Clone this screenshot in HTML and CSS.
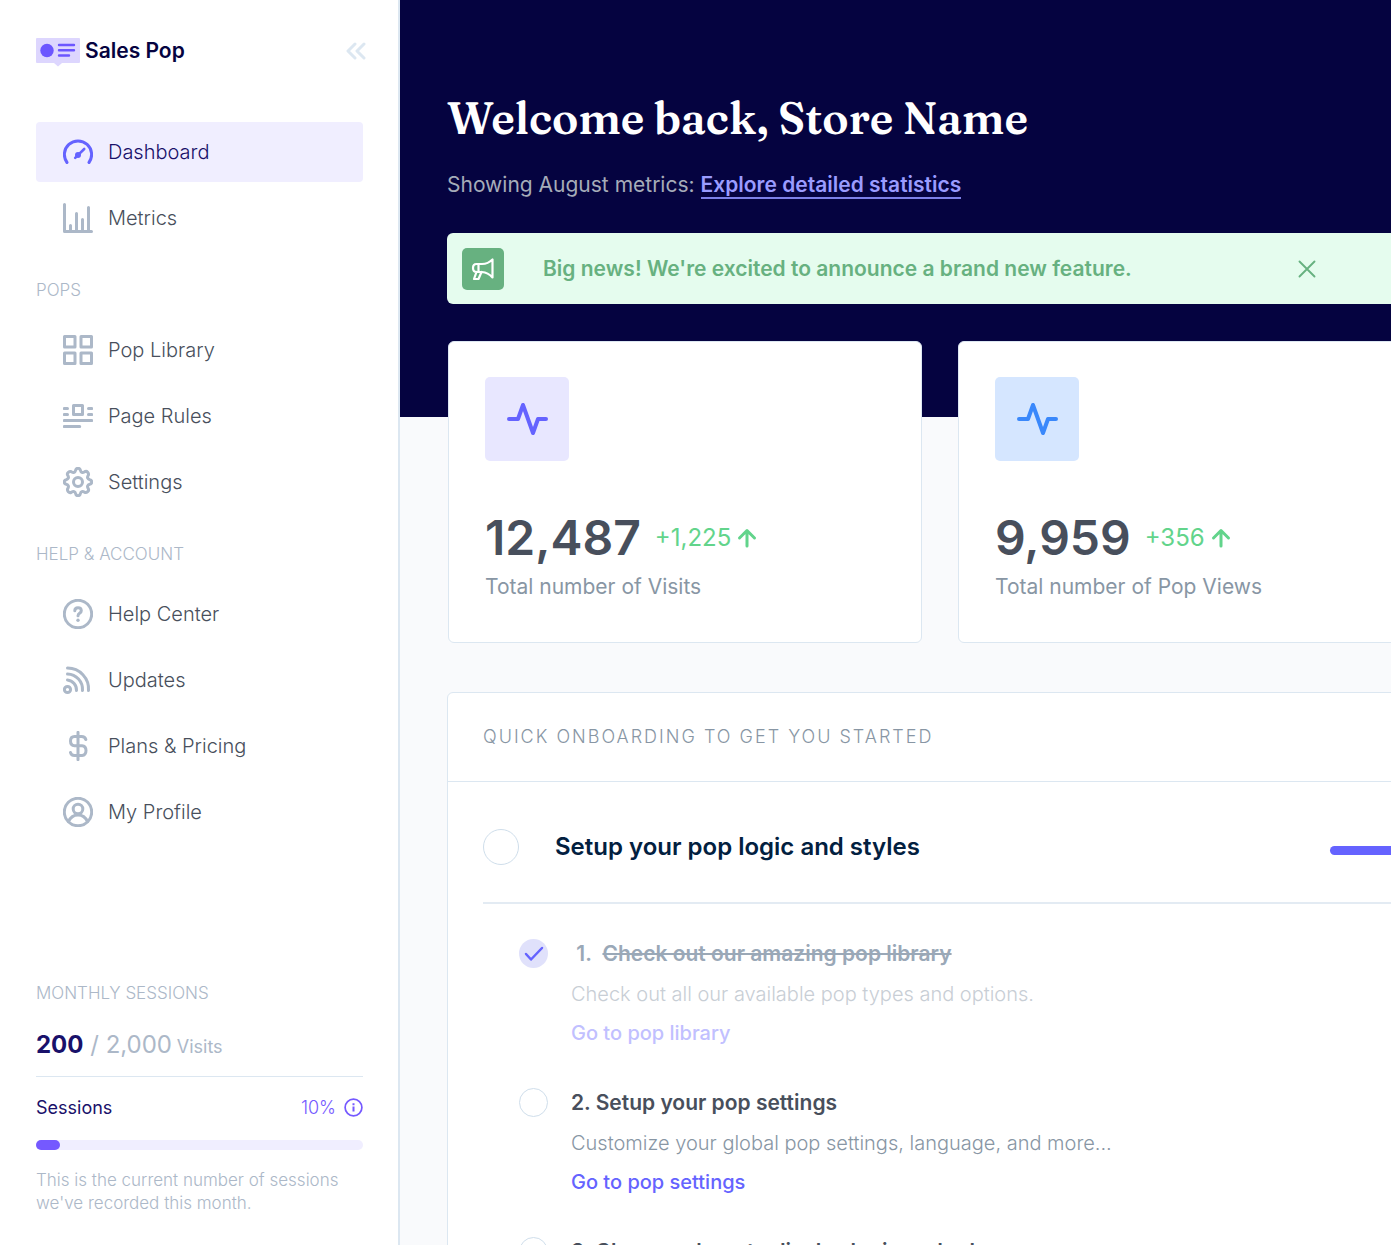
FILE: index.html
```html
<!DOCTYPE html>
<html lang="en">
<head>
<meta charset="utf-8">
<meta name="viewport" content="width=device-width, initial-scale=1">
<title>Sales Pop – Dashboard</title>
<link rel="stylesheet" href="styles.css">
</head>
<body>
<div class="app">
  <aside class="sidebar">
    <header class="brand-row">
      <a class="brand" href="#">
        <svg class="brand-mark" width="44" height="32" viewBox="0 0 44 32" aria-hidden="true">
          <path d="M1 3h42q1 0 1 1v23q0 1-1 1H26l-4 3.500-4-3.500H1q-1 0-1-1V4q0-1 1-1z" fill="#ddd6fe"/>
          <circle cx="11" cy="15.500" r="6.700" fill="#6c56ff"/>
          <path d="M23 10h15M23 15.300h15M23 20.500h10" stroke="#6c56ff" stroke-width="2.400" stroke-linecap="round"/>
        </svg>
        <span>Sales Pop</span>
      </a>
      <button class="icon-button collapse" type="button" aria-label="Collapse sidebar">
        <svg width="20" height="18" viewBox="0 0 20 18" fill="none" stroke="currentColor" stroke-width="3" stroke-linecap="round" stroke-linejoin="round"><path d="M9 2L2 9l7 7M18 2l-7 7 7 7"/></svg>
      </button>
    </header>

    <nav class="nav" aria-label="Main">
      <a class="nav-link is-active" href="#">
        <svg class="nav-icon" viewBox="0 0 30 30"><path d="M4 25.500A13.600 13.600 0 1 1 26 25.500"/><circle cx="15" cy="18" r="3" fill="currentColor" stroke="none"/><path d="M12.200 20.800l3-3 6-5.800" stroke-width="2.600"/></svg>
        Dashboard
      </a>
      <a class="nav-link" href="#">
        <svg class="nav-icon" viewBox="0 0 30 30"><path d="M1.500 1.500v27h27M7.500 28v-5.500M13.500 28V10.500M19.500 28V16.500M25.500 28V4.500"/></svg>
        Metrics
      </a>

      <h2 class="nav-heading">POPS</h2>
      <a class="nav-link" href="#">
        <svg class="nav-icon" viewBox="0 0 30 30"><path d="M1.500 1.500h10.500v10.500H1.500zM18 1.500h10.500v10.500H18zM1.500 18h10.500v10.500H1.500zM18 18h10.500v10.500H18z"/></svg>
        Pop Library
      </a>
      <a class="nav-link" href="#">
        <svg class="nav-icon" viewBox="0 0 30 30"><path d="M10.500 4.500h9v9h-9zM1.300 7.500h3.200M1.300 13.500h3.200M25.500 7.500h3.200M25.500 13.500h3.200M1.300 19.500h27.400M1.300 25.500h15.400"/></svg>
        Page Rules
      </a>
      <a class="nav-link" href="#">
        <svg class="nav-icon" viewBox="0 0 30 30"><circle cx="15" cy="15" r="4.500"/><path d="M12.700 3.200Q13 1.300 15 1.300T17.300 3.200Q18.300 6.800 21.700 4.700Q23.400 3.800 24.700 5.300T25.300 8.300Q23.200 11.700 26.800 12.700Q28.700 13 28.700 15T26.800 17.300Q23.200 18.300 25.300 21.700Q26.200 23.400 24.700 24.700T21.700 25.300Q18.300 23.200 17.300 26.800Q17 28.700 15 28.700T12.700 26.800Q11.700 23.200 8.300 25.300Q6.600 26.200 5.300 24.700T4.700 21.700Q6.800 18.300 3.200 17.300Q1.300 17 1.300 15T3.200 12.700Q6.800 11.700 4.700 8.300Q3.800 6.600 5.300 5.300T8.300 4.700Q11.700 6.800 12.700 3.200z"/></svg>
        Settings
      </a>

      <h2 class="nav-heading">HELP &amp; ACCOUNT</h2>
      <a class="nav-link" href="#">
        <svg class="nav-icon" viewBox="0 0 30 30"><circle cx="15" cy="15" r="13.700"/><path d="M11.800 11.800q0-3 3.200-3t3.300 2.900q0 1.500-1.600 2.400t-1.700 2.700"/><circle cx="15" cy="21.300" r="1.700" fill="currentColor" stroke="none"/></svg>
        Help Center
      </a>
      <a class="nav-link" href="#">
        <svg class="nav-icon" viewBox="0 0 30 30"><circle cx="4.500" cy="24.500" r="3.100"/><path d="M4.500 3A21 21 0 0 1 25.500 25.500M4.500 9A15.500 15.500 0 0 1 19.500 25.500M4.500 15A10 10 0 0 1 13.500 25.500"/></svg>
        Updates
      </a>
      <a class="nav-link" href="#">
        <svg class="nav-icon" viewBox="0 0 30 30"><path d="M15 1.300v27.400M22.800 8.500q-.8-3-4.300-3h-7q-4 0-4 4.500t4 4.700h7.500q4 .2 4 4.800t-4 5h-7.500q-3.400 0-4-3"/></svg>
        Plans &amp; Pricing
      </a>
      <a class="nav-link" href="#">
        <svg class="nav-icon" viewBox="0 0 30 30"><circle cx="15" cy="15" r="13.700"/><circle cx="15" cy="12" r="4.800"/><path d="M5.500 24.500q3-6.500 9.500-6.500t9.500 6.500"/></svg>
        My Profile
      </a>
    </nav>

    <section class="usage">
      <h2 class="usage-title">MONTHLY SESSIONS</h2>
      <p class="usage-count"><strong>200</strong> / 2,000 <small>Visits</small></p>
      <div class="usage-row">
        <span>Sessions</span>
        <span class="usage-percent">10%
          <svg width="20" height="20" viewBox="0 0 20 20" fill="none" stroke="currentColor" stroke-width="1.700"><circle cx="10.500" cy="9.500" r="8.400"/><path d="M10.500 8.500v5M10.500 5.300v2" stroke-width="2"/></svg>
        </span>
      </div>
      <div class="usage-track" role="progressbar" aria-label="Sessions" aria-valuenow="10" aria-valuemin="0" aria-valuemax="100"><div class="usage-fill"></div></div>
      <p class="usage-note">This is the current number of sessions we've recorded this month.</p>
    </section>
  </aside>

  <main class="main">
    <section class="hero">
      <h1>Welcome back, Store Name</h1>
      <p class="subtitle">Showing August metrics: <a href="#">Explore detailed statistics</a></p>
      <div class="notice">
        <span class="notice-icon">
          <svg width="24" height="24" viewBox="0 0 24 24" fill="none" stroke="#fff" stroke-width="2.200" stroke-linejoin="round" stroke-linecap="round"><path d="M5.500 7H11q6 0 10.500-4.500v18q-4.500-5-10.500-5.500H5.500q-3.500 0-3.500-4t3.500-4zM7.500 7v8M5.500 15L3 22h4.500l3-7"/></svg>
        </span>
        <p>Big news! We're excited to announce a brand new feature.</p>
        <button class="icon-button" type="button" aria-label="Dismiss">
          <svg width="18" height="18" viewBox="0 0 18 18" fill="none" stroke="currentColor" stroke-width="1.900" stroke-linecap="round"><path d="M1.500 1.500l15 15M16.500 1.500l-15 15"/></svg>
        </button>
      </div>
    </section>

    <section class="stats" aria-label="Metrics">
      <article class="card stat">
        <span class="stat-icon"><svg width="42" height="36" viewBox="0 0 42 36"><path d="M3 18h9l5-14 10 28 5-14h8"/></svg></span>
        <p class="stat-line"><strong>12,487</strong><span class="delta">+1,225<svg width="20" height="20" viewBox="0 0 20 20"><path d="M10 18V3M2.500 10L10 2.500l7.500 7.500"/></svg></span></p>
        <p class="stat-label">Total number of Visits</p>
      </article>
      <article class="card stat">
        <span class="stat-icon is-blue"><svg width="42" height="36" viewBox="0 0 42 36"><path d="M3 18h9l5-14 10 28 5-14h8"/></svg></span>
        <p class="stat-line"><strong>9,959</strong><span class="delta">+356<svg width="20" height="20" viewBox="0 0 20 20"><path d="M10 18V3M2.500 10L10 2.500l7.500 7.500"/></svg></span></p>
        <p class="stat-label">Total number of Pop Views</p>
      </article>
    </section>

    <section class="card onboarding">
      <h2 class="onboarding-title">QUICK ONBOARDING TO GET YOU STARTED</h2>
      <div class="onboarding-body">
        <header class="group">
          <input class="check check-large" type="checkbox" id="group">
          <label for="group">Setup your pop logic and styles</label>
          <div class="group-progress" role="progressbar" aria-label="Setup progress" aria-valuenow="33"></div>
        </header>
        <ul class="steps">
          <li class="step is-done">
            <input class="check" type="checkbox" id="step1" checked>
            <div class="step-text">
              <label for="step1">&nbsp;1.&nbsp; <s>Check out our amazing pop library</s></label>
              <p>Check out all our available pop types and options.</p>
              <a href="#">Go to pop library</a>
            </div>
          </li>
          <li class="step">
            <input class="check" type="checkbox" id="step2">
            <div class="step-text">
              <label for="step2">2. Setup your pop settings</label>
              <p>Customize your global pop settings, language, and more...</p>
              <a href="#">Go to pop settings</a>
            </div>
          </li>
          <li class="step">
            <input class="check" type="checkbox" id="step3">
            <div class="step-text">
              <label for="step3">3. Choose where to display logic and rules</label>
            </div>
          </li>
        </ul>
      </div>
    </section>
  </main>
</div>
</body>
</html>
```
FILE: styles.css
```css
:root {
  --navy: #050340;
  --ink: #484f5c;
  --muted: #8896a4;
  --soft: #acb8c8;
  --line: #dce7f1;
  --violet: #6563ff;
}

* { box-sizing: border-box; }

body {
  margin: 0;
  background: #f9fafc;
  color: var(--ink);
  font-family: Inter, "Liberation Sans", sans-serif;
  font-size: 20px;
  line-height: 24px;
}

h1, h2, p, ul { margin: 0; padding: 0; }
ul { list-style: none; }
a { color: inherit; text-decoration: none; }

.app {
  display: grid;
  grid-template-columns: 400px minmax(0, 1fr);
  height: 100vh;
  overflow: hidden;
}

/* Sidebar */
.sidebar {
  display: flex;
  flex-direction: column;
  padding: 35px 35px 30px 36px;
  border-right: 2px solid var(--line);
  background: #fff;
}

.brand-row {
  display: flex;
  align-items: center;
  justify-content: space-between;
  margin-bottom: 55px;
}

.brand {
  display: flex;
  align-items: center;
  gap: 5px;
  color: var(--navy);
  font-size: 21px;
  font-weight: 600;
}

.icon-button {
  display: grid;
  padding: 0;
  border: 0;
  background: none;
  color: #67b180;
  cursor: pointer;
}

.collapse { color: var(--line); margin-right: -3px; }

.nav-link {
  display: flex;
  align-items: center;
  gap: 15px;
  height: 60px;
  margin-bottom: 6px;
  padding-left: 27px;
  border-radius: 4px;
  font-weight: 300;
}

.nav-link.is-active { background: #f0eeff; color: #19116a; }

.nav-icon {
  width: 30px;
  height: 30px;
  fill: none;
  stroke: currentColor;
  stroke-width: 3;
  stroke-linecap: round;
  stroke-linejoin: round;
  color: var(--soft);
}

.is-active .nav-icon { color: var(--violet); }

.nav-heading, .usage-title {
  color: var(--soft);
  font-size: 17px;
  font-weight: 300;
  line-height: 24px;
}

.nav-heading { padding: 24px 0 18px; }

.usage { margin-top: auto; }

.usage-count {
  padding: 25px 0 14px;
  border-bottom: 1px solid var(--line);
  color: var(--soft);
  font-size: 24px;
  line-height: 30px;
}

.usage-count strong { color: #19116a; }
.usage-count small { font-size: 18px; margin-left: -2px; }

.usage-row {
  display: flex;
  justify-content: space-between;
  margin: 19px 0 20px;
  color: #19116a;
  font-size: 18px;
}

.usage-percent { display: flex; align-items: center; gap: 7px; color: #7559ff; font-weight: 300; }

.usage-track { height: 10px; border-radius: 5px; background: #f0eeff; }
.usage-fill { width: 24px; height: 10px; border-radius: 5px; background: #7559ff; }

.usage-note {
  margin-top: 19px;
  color: var(--soft);
  font-size: 17px;
  font-weight: 300;
  line-height: 23px;
}

/* Main column */
.main { min-width: 0; overflow: hidden; }

.hero {
  padding: 88px 0 113px 47px;
  background: var(--navy);
}

h1 {
  color: #fff;
  font-family: Fraunces, "Liberation Serif", serif;
  font-size: 44px;
  font-weight: 600;
  line-height: 60px;
}

.subtitle {
  margin: 22px 0 33px;
  color: #a5acb9;
  font-size: 21px;
  line-height: 30px;
}

.subtitle a {
  color: #9a9cff;
  border-bottom: 2px solid #7d80e8;
  font-weight: 600;
}

.notice {
  display: flex;
  align-items: center;
  height: 71px;
  padding: 0 75px 0 15px;
  border-radius: 6px 0 0 6px;
  background: #e5fcee;
  color: #67b180;
  font-size: 21px;
  font-weight: 600;
}

.notice p { flex: 1; }

.notice-icon {
  display: grid;
  place-items: center;
  width: 42px;
  height: 42px;
  margin-right: 39px;
  border-radius: 5px;
  background: #67b180;
}

.card {
  border: 1px solid var(--line);
  border-radius: 6px;
  background: #fff;
}

.stats {
  display: grid;
  grid-template-columns: 474px 474px;
  gap: 36px;
  margin: -76px 0 49px 48px;
}

.stat { padding: 35px 36px 40px; }

.stat-icon {
  display: grid;
  place-items: center;
  width: 84px;
  height: 84px;
  margin-bottom: 47px;
  border-radius: 5px;
  background: #e8e7ff;
  color: var(--violet);
}

.stat-icon.is-blue { background: #d5e6ff; color: #3a88fb; }

.stat-icon svg, .delta svg {
  fill: none;
  stroke: currentColor;
  stroke-width: 4;
  stroke-linecap: round;
  stroke-linejoin: round;
}

.delta svg { stroke-width: 3; }

.stat-line { display: flex; align-items: center; gap: 14px; }
.stat-line strong { font-size: 48px; font-weight: 600; line-height: 60px; }
.delta { display: flex; align-items: center; gap: 6px; color: #62d48b; font-size: 24px; }
.stat-label { margin-top: 4px; color: var(--muted); font-size: 21px; line-height: 30px; }

.onboarding { width: 1100px; margin-left: 47px; }

.onboarding-title {
  padding: 32px 35px;
  border-bottom: 1px solid var(--line);
  color: var(--muted);
  font-size: 18px;
  font-weight: 300;
  letter-spacing: 2px;
}

.onboarding-body { padding: 0 35px; }

.group {
  display: flex;
  align-items: center;
  padding: 47px 0 37px;
  border-bottom: 2px solid #e3ebf3;
  color: #02203f;
  font-size: 24px;
  font-weight: 600;
}

.group label { flex: 1; margin-left: 36px; }
.group-progress { width: 181px; height: 9px; margin-top: 6px; border-radius: 5px; background: var(--violet); }

.check {
  appearance: none;
  flex: none;
  width: 29px;
  height: 29px;
  margin: 0;
  border: 1px solid #cfdeeb;
  border-radius: 50%;
}

.check-large { width: 36px; height: 36px; }

.check:checked {
  border: 0;
  background: #e0e1fb url("data:image/svg+xml,%3Csvg xmlns='http://www.w3.org/2000/svg' viewBox='0 0 29 29'%3E%3Cpath d='M7 15l5 5.500 11-11.500' fill='none' stroke='%236563ff' stroke-width='2.500' stroke-linecap='round' stroke-linejoin='round'/%3E%3C/svg%3E");
}

.steps {
  display: grid;
  gap: 41px;
  padding: 35px 0 0 36px;
}

.step { display: flex; gap: 23px; }
.step-text { display: grid; gap: 12px; }
.step-text label { font-size: 21px; font-weight: 600; line-height: 30px; }
.step-text p { color: var(--muted); font-weight: 300; line-height: 27px; }
.step-text a { color: var(--violet); font-weight: 500; line-height: 27px; }

.is-done label { color: #9aa8b7; }
.is-done .step-text p { color: #c8ced5; }
.is-done .step-text a { color: #c1c0ff; }
```
